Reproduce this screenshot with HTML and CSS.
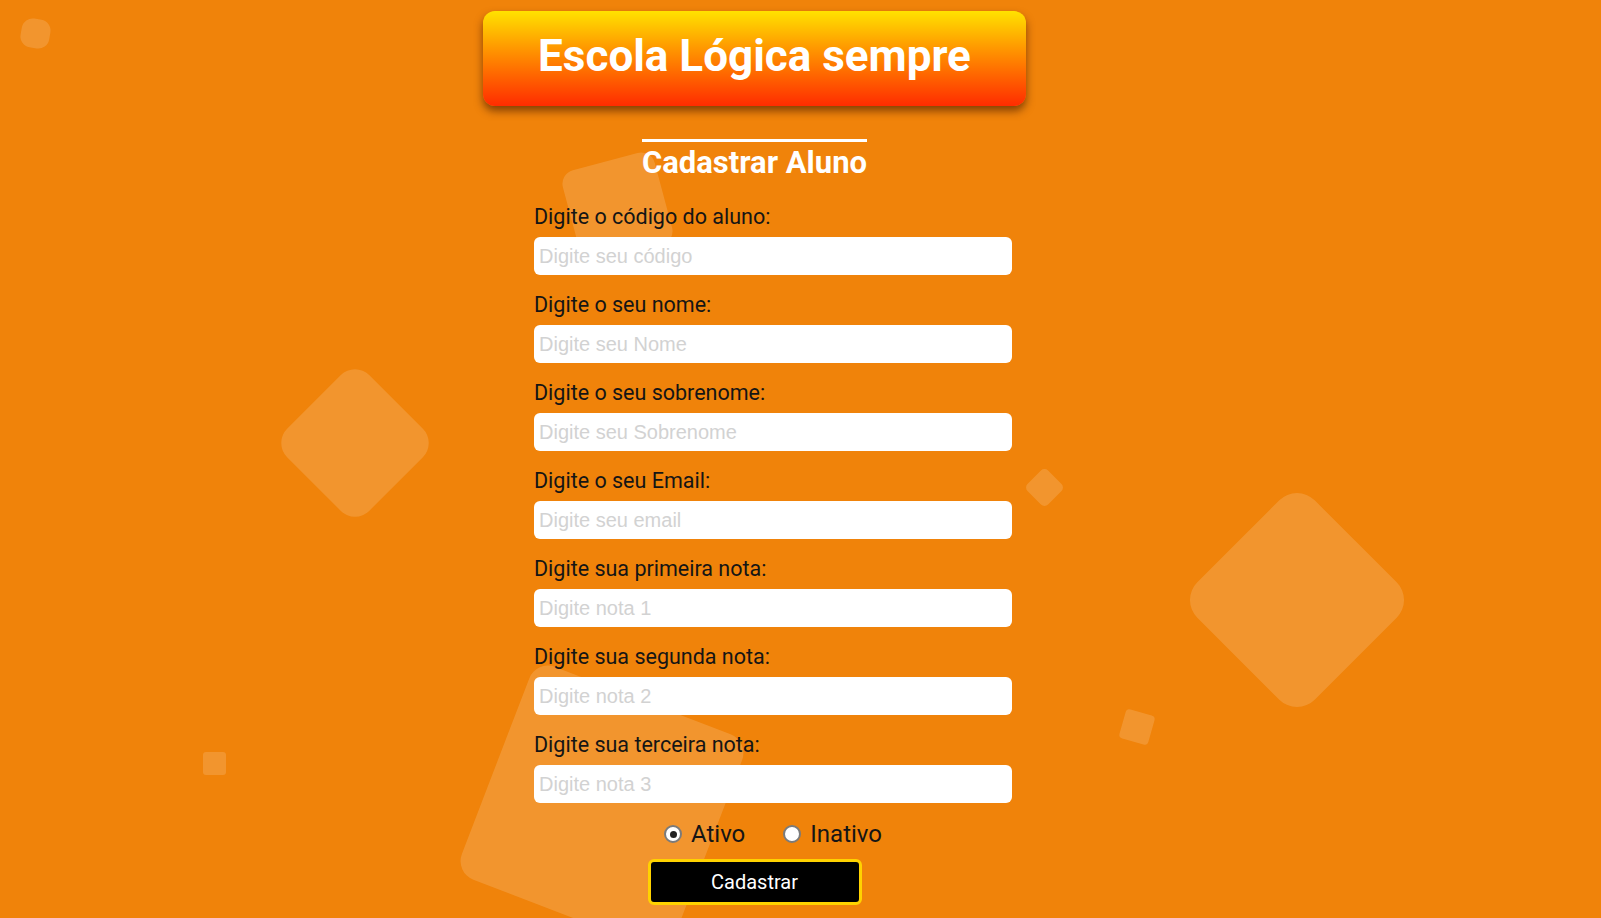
FILE: index.html
```html
<!DOCTYPE html>
<html lang="pt-BR">
<head>
<meta charset="utf-8">
<title>Escola Lógica sempre</title>
<link rel="stylesheet" href="styles.css">
</head>
<body>
<div class="bg" aria-hidden="true">
  <span class="shape s1"></span>
  <span class="shape s2"></span>
  <span class="shape s3"></span>
  <span class="shape s4"></span>
  <span class="shape s5"></span>
  <span class="shape s6"></span>
  <span class="shape s7"></span>
  <span class="shape s8"></span>
</div>
<div class="page">
  <header class="banner"><h1>Escola Lógica sempre</h1></header>
  <h2 class="subtitle">Cadastrar Aluno</h2>
  <form class="form">
    <div class="fields">
      <div class="field"><label>Digite o código do aluno:</label><input type="text" placeholder="Digite seu código"></div>
      <div class="field"><label>Digite o seu nome:</label><input type="text" placeholder="Digite seu Nome"></div>
      <div class="field"><label>Digite o seu sobrenome:</label><input type="text" placeholder="Digite seu Sobrenome"></div>
      <div class="field"><label>Digite o seu Email:</label><input type="text" placeholder="Digite seu email"></div>
      <div class="field"><label>Digite sua primeira nota:</label><input type="text" placeholder="Digite nota 1"></div>
      <div class="field"><label>Digite sua segunda nota:</label><input type="text" placeholder="Digite nota 2"></div>
      <div class="field"><label>Digite sua terceira nota:</label><input type="text" placeholder="Digite nota 3"></div>
      <div class="status">
        <label class="opt"><input type="radio" name="st" checked><span>Ativo</span></label>
        <label class="opt"><input type="radio" name="st"><span>Inativo</span></label>
      </div>
    </div>
    <button type="button" class="submit">Cadastrar</button>
  </form>
</div>
</body>
</html>
```
FILE: styles.css
```css
html, body {
  margin: 0;
  padding: 0;
}
body {
  width: 1601px;
  height: 918px;
  overflow: hidden;
  background: #f0830a;
  font-family: Roboto, "Open Sans", sans-serif;
  position: relative;
}
.bg {
  position: absolute;
  inset: 0;
  z-index: 0;
}
.shape {
  position: absolute;
  display: block;
  background: rgba(255, 255, 255, 0.15);
}
.s1 { left: 21px; top: 19px; width: 29px; height: 29px; border-radius: 11px; transform: rotate(10deg); }
.s2 { left: 297px; top: 385px; width: 116px; height: 116px; border-radius: 20px; transform: rotate(45deg); }
.s3 { left: 1214px; top: 517px; width: 166px; height: 166px; border-radius: 25px; transform: rotate(45deg); }
.s4 { left: 1030px; top: 473px; width: 29px; height: 29px; border-radius: 5px; transform: rotate(45deg); }
.s5 { left: 1122px; top: 712px; width: 30px; height: 30px; border-radius: 4px; transform: rotate(16deg); }
.s6 { left: 203px; top: 752px; width: 23px; height: 23px; border-radius: 3px; }
.s7 { left: 570px; top: 160px; width: 95px; height: 95px; border-radius: 14px; transform: rotate(-15deg); }
.s8 { left: 488px; top: 693px; width: 228px; height: 228px; border-radius: 20px; transform: rotate(21deg); }

.page {
  position: relative;
  z-index: 1;
  width: 1509px;
  display: flex;
  flex-direction: column;
  align-items: center;
}
.banner {
  margin-top: 11px;
  width: 543px;
  height: 95px;
  box-sizing: border-box;
  border-radius: 12px;
  background: linear-gradient(to bottom, #ffe200 0%, #ff9a00 38%, #ff6a00 65%, #ff2c00 100%);
  box-shadow: 0 5px 9px rgba(60, 20, 0, 0.6);
  display: flex;
  align-items: center;
  justify-content: center;
  padding-bottom: 6px;
}
.banner h1 {
  margin: 0;
  color: #fff;
  font-size: 44px;
  font-weight: 700;
  line-height: normal;
}
.subtitle {
  margin: 33px 0 0;
  padding-top: 4px;
  border-top: 3px solid #fff;
  color: #fff;
  font-size: 31px;
  font-weight: 700;
  line-height: 34px;
}
.form {
  display: flex;
  flex-direction: column;
  align-items: center;
  width: 515px;
}
.fields {
  width: 478px;
  padding-left: 37px;
  margin-top: 23px;
  display: flex;
  flex-direction: column;
  gap: 16px;
}
.field {
  display: flex;
  flex-direction: column;
}
.field label {
  font-size: 21.5px;
  line-height: 28px;
  color: #151515;
  margin-bottom: 6px;
}
.field input {
  width: 478px;
  height: 38px;
  box-sizing: border-box;
  border: none;
  border-radius: 6px;
  background: #fff;
  padding: 0 5px;
  font-family: "Liberation Sans", Arial, sans-serif;
  font-size: 20px;
  color: #333;
  outline: none;
}
.field input::placeholder {
  color: #d2d2d2;
}
.status {
  height: 30px;
  display: flex;
  justify-content: center;
  align-items: center;
  gap: 38px;
}
.opt {
  display: flex;
  align-items: center;
  gap: 9px;
  font-size: 24px;
  color: #151515;
}
.opt input {
  appearance: none;
  -webkit-appearance: none;
  margin: 0;
  width: 18px;
  height: 18px;
  box-sizing: border-box;
  border: 2px solid #7b7b7b;
  border-radius: 50%;
  background: #fff;
  display: grid;
  place-items: center;
}
.opt input:checked::after {
  content: "";
  width: 7px;
  height: 7px;
  border-radius: 50%;
  background: #222;
}
.submit {
  margin-top: 10px;
  width: 214px;
  height: 46px;
  box-sizing: border-box;
  background: #000;
  border: 3px solid #ffd200;
  border-radius: 6px;
  color: #fff;
  font-family: Roboto, "Open Sans", sans-serif;
  font-size: 20px;
  cursor: pointer;
}
```
